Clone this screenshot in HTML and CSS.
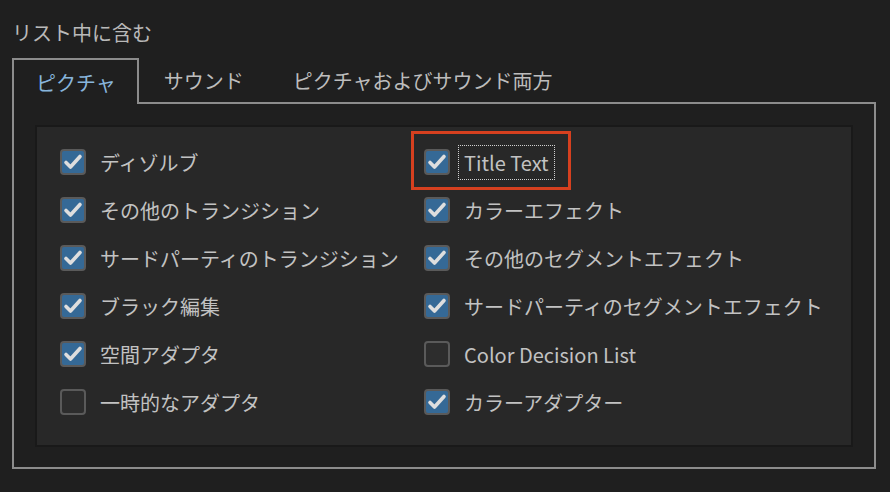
FILE: index.html
```html
<!DOCTYPE html>
<html>

<head>
    <title>リスト中に含む</title>
    <link rel="stylesheet" href="styles.css">
</head>

<body>
    <div class="page">
        <div class="section-title">リスト中に含む</div>

        <div class="tabs">
            <div class="tab active">ピクチャ</div>
            <div class="tab">サウンド</div>
            <div class="tab">ピクチャおよびサウンド両方</div>
            <div class="tab-fill"></div>
        </div>

        <div class="panel">
            <div class="check-box">
                <div class="check-grid">
                    <!-- 左の列 / 右の列 を交互に -->
                    <div class="item"><span class="box on"><svg viewBox="0 0 22 22"><polyline points="4,11.5 8.5,16 18,5.5" /></svg></span><span class="label">ディゾルブ</span></div>
                    <div class="item">
                        <div class="highlight"></div>
                        <span class="box on"><svg viewBox="0 0 22 22"><polyline points="4,11.5 8.5,16 18,5.5" /></svg></span><span class="label focus">Title Text</span>
                    </div>

                    <div class="item"><span class="box on"><svg viewBox="0 0 22 22"><polyline points="4,11.5 8.5,16 18,5.5" /></svg></span><span class="label">その他のトランジション</span></div>
                    <div class="item"><span class="box on"><svg viewBox="0 0 22 22"><polyline points="4,11.5 8.5,16 18,5.5" /></svg></span><span class="label">カラーエフェクト</span></div>

                    <div class="item"><span class="box on"><svg viewBox="0 0 22 22"><polyline points="4,11.5 8.5,16 18,5.5" /></svg></span><span class="label">サードパーティのトランジション</span></div>
                    <div class="item"><span class="box on"><svg viewBox="0 0 22 22"><polyline points="4,11.5 8.5,16 18,5.5" /></svg></span><span class="label">その他のセグメントエフェクト</span></div>

                    <div class="item"><span class="box on"><svg viewBox="0 0 22 22"><polyline points="4,11.5 8.5,16 18,5.5" /></svg></span><span class="label">ブラック編集</span></div>
                    <div class="item"><span class="box on"><svg viewBox="0 0 22 22"><polyline points="4,11.5 8.5,16 18,5.5" /></svg></span><span class="label">サードパーティのセグメントエフェクト</span></div>

                    <div class="item"><span class="box on"><svg viewBox="0 0 22 22"><polyline points="4,11.5 8.5,16 18,5.5" /></svg></span><span class="label">空間アダプタ</span></div>
                    <div class="item"><span class="box"></span><span class="label">Color Decision List</span></div>

                    <div class="item"><span class="box"></span><span class="label">一時的なアダプタ</span></div>
                    <div class="item"><span class="box on"><svg viewBox="0 0 22 22"><polyline points="4,11.5 8.5,16 18,5.5" /></svg></span><span class="label">カラーアダプター</span></div>
                </div>
            </div>
        </div>
    </div>
</body>

</html>
```

FILE: styles.css
```css
body {
    font-family: "Noto Sans CJK JP", "Noto Sans", sans-serif;
    background-color: #1f1f1f;
    color: #c2c2c2;
    margin: 0;
    padding: 0;
}

.page {
    padding: 21px 14px 0 12px;
    width: 864px;
}

.section-title {
    font-size: 20px;
    line-height: 24px;
    color: #b9b9b9;
    margin-bottom: 13px;
}

/* Tabs */
.tabs {
    display: flex;
    height: 46px;
}

.tab {
    font-size: 20px;
    color: #bdbdbd;
    padding: 2px 24px 0 25px;
    line-height: 42px;
    border-bottom: 2px solid #8c8c8c;
}

.tab.active {
    color: #88b5dc;
    padding: 2px 21px 0 22px;
    border: 2px solid #8c8c8c;
    border-bottom: none;
    line-height: 42px;
}

.tab-fill {
    flex: 1;
    border-bottom: 2px solid #8c8c8c;
}

/* Panel */
.panel {
    border: 2px solid #8c8c8c;
    border-top: none;
    padding: 21px 21px 20px 21px;
}

.check-box {
    background-color: #282828;
    border: 2px solid #191919;
    padding: 11px 0 0 23px;
    box-sizing: border-box;
    height: 322px;
}

.check-grid {
    display: grid;
    grid-template-columns: 364px 1fr;
    grid-auto-rows: 48px;
}

.item {
    position: relative;
    display: flex;
    align-items: center;
    font-size: 20px;
}

.box {
    width: 26px;
    height: 26px;
    box-sizing: border-box;
    border: 2px solid #5a5a5a;
    border-radius: 4px;
    background-color: #2d2d2d;
    flex-shrink: 0;
}

.box.on {
    background-color: #356996;
}

.box svg {
    display: block;
    width: 22px;
    height: 22px;
}

.box polyline {
    fill: none;
    stroke: #dedede;
    stroke-width: 3.6;
    stroke-linecap: round;
    stroke-linejoin: round;
}

.label {
    margin-left: 8px;
    padding: 0 5px;
    border: 1px solid transparent;
    line-height: 33px;
    white-space: nowrap;
}

.label.focus {
    border: 1px dotted #d0d0d0;
}

.highlight {
    position: absolute;
    left: -13px;
    top: -7px;
    width: 160px;
    height: 59px;
    box-sizing: border-box;
    border: 3px solid #d6401f;
}
```
